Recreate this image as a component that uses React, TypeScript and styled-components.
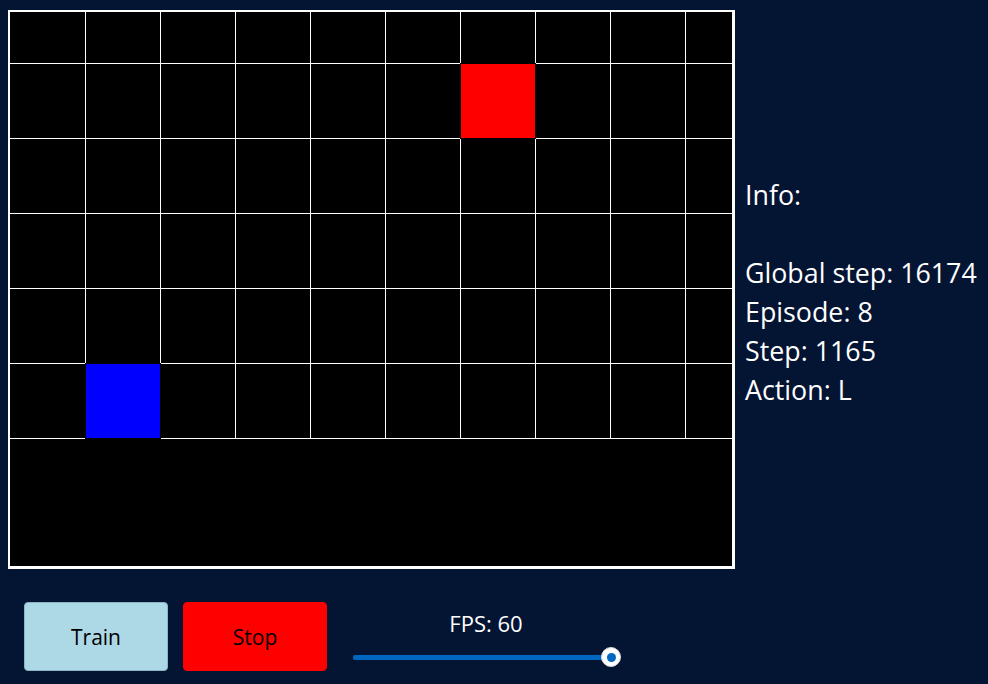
import React from "react";
import styled, { createGlobalStyle } from "styled-components";

const Global = createGlobalStyle`
  html, body { margin: 0; padding: 0; background: #041433; }
  body { font-family: "Open Sans", "Noto Sans", sans-serif; color: #ffffff; }
  #root { width: 988px; height: 684px; }
`;

const Page = styled.div`
  width: 988px;
  height: 684px;
  box-sizing: border-box;
  padding: 10px 0 0 8px;
  display: flex;
  flex-direction: column;
  background: #041433;
`;

const TopRow = styled.div`
  display: flex;
  align-items: center;
  gap: 10px;
`;

const Board = styled.div`
  width: 727px;
  height: 559px;
  box-sizing: border-box;
  border-style: solid;
  border-color: #ffffff;
  border-width: 2px 3px 3px 2px;
  background: #000000;
  box-shadow: inset 1px 1px 0 #9ea3bb;
  overflow: hidden;
  flex: none;
`;

const BoardSvg = styled.svg`
  display: block;
`;

const Info = styled.div`
  font-size: 26.8px;
  line-height: 39px;
  white-space: pre;
  color: #ffffff;
  margin-top: 4px;
`;

const BottomRow = styled.div`
  display: flex;
  align-items: flex-start;
  padding: 33px 0 0 16px;
`;

const Button = styled.button<{ $bg: string; $border: string }>`
  width: 144px;
  height: 69px;
  box-sizing: border-box;
  border: 1px solid ${(p) => p.$border};
  border-radius: 4px;
  background: ${(p) => p.$bg};
  color: #000000;
  font-family: "Open Sans", "Noto Sans", sans-serif;
  font-size: 21px;
  padding: 0;
  margin-right: 15px;
  cursor: pointer;
`;

const SliderBox = styled.div`
  width: 268px;
  margin-left: 11px;
  display: flex;
  flex-direction: column;
  align-items: center;
`;

const SliderLabel = styled.div`
  font-size: 22px;
  line-height: 30px;
  margin-top: 6px;
  margin-left: -2px;
`;

const Track = styled.div`
  position: relative;
  width: 268px;
  height: 20px;
  margin-top: 9px;
  display: flex;
  align-items: center;
`;

const TrackLine = styled.div`
  width: 258px;
  height: 5px;
  background: #0067c0;
  border-radius: 2px;
`;

const Thumb = styled.div`
  position: absolute;
  left: 248px;
  top: 0;
  width: 20px;
  height: 20px;
  box-sizing: border-box;
  border-radius: 50%;
  background: #ffffff;
  border: 1px solid #d8d8d8;
  display: flex;
  align-items: center;
  justify-content: center;
  &::after {
    content: "";
    width: 9px;
    height: 9px;
    border-radius: 50%;
    background: #0067c0;
  }
`;

const W = 722;
const H = 554;
const vLines = [75, 150, 225, 300, 375, 450, 525, 600, 675];
const hLines = [51, 126, 201, 276, 351, 426];

function GridWorld() {
  return (
    <BoardSvg width={W} height={H} viewBox={`0 0 ${W} ${H}`}>
      <rect x={0} y={0} width={W} height={H} fill="#000" />
      {vLines.map((x) => (
        <rect key={"v" + x} x={x} y={0} width={1} height={427} fill="#fff" />
      ))}
      {hLines.map((y) => (
        <rect key={"h" + y} x={0} y={y} width={W} height={1} fill="#fff" />
      ))}
      <rect x={450} y={51} width={76} height={76} fill="#000" />
      <rect x={451} y={52} width={74} height={74} fill="#ff0000" />
      <rect x={75} y={351} width={76} height={76} fill="#000" />
      <rect x={76} y={352} width={74} height={74} fill="#0000ff" />
    </BoardSvg>
  );
}

export default function App() {
  return (
    <>
      <Global />
      <Page>
        <TopRow>
          <Board>
            <GridWorld />
          </Board>
          <Info>{"Info:\n\nGlobal step: 16174\nEpisode: 8\nStep: 1165\nAction: L"}</Info>
        </TopRow>
        <BottomRow>
          <Button $bg="#add8e6" $border="#8fb4c4">Train</Button>
          <Button $bg="#ff0000" $border="#ff0000">Stop</Button>
          <SliderBox>
            <SliderLabel>FPS: 60</SliderLabel>
            <Track>
              <TrackLine />
              <Thumb />
            </Track>
          </SliderBox>
        </BottomRow>
      </Page>
    </>
  );
}
